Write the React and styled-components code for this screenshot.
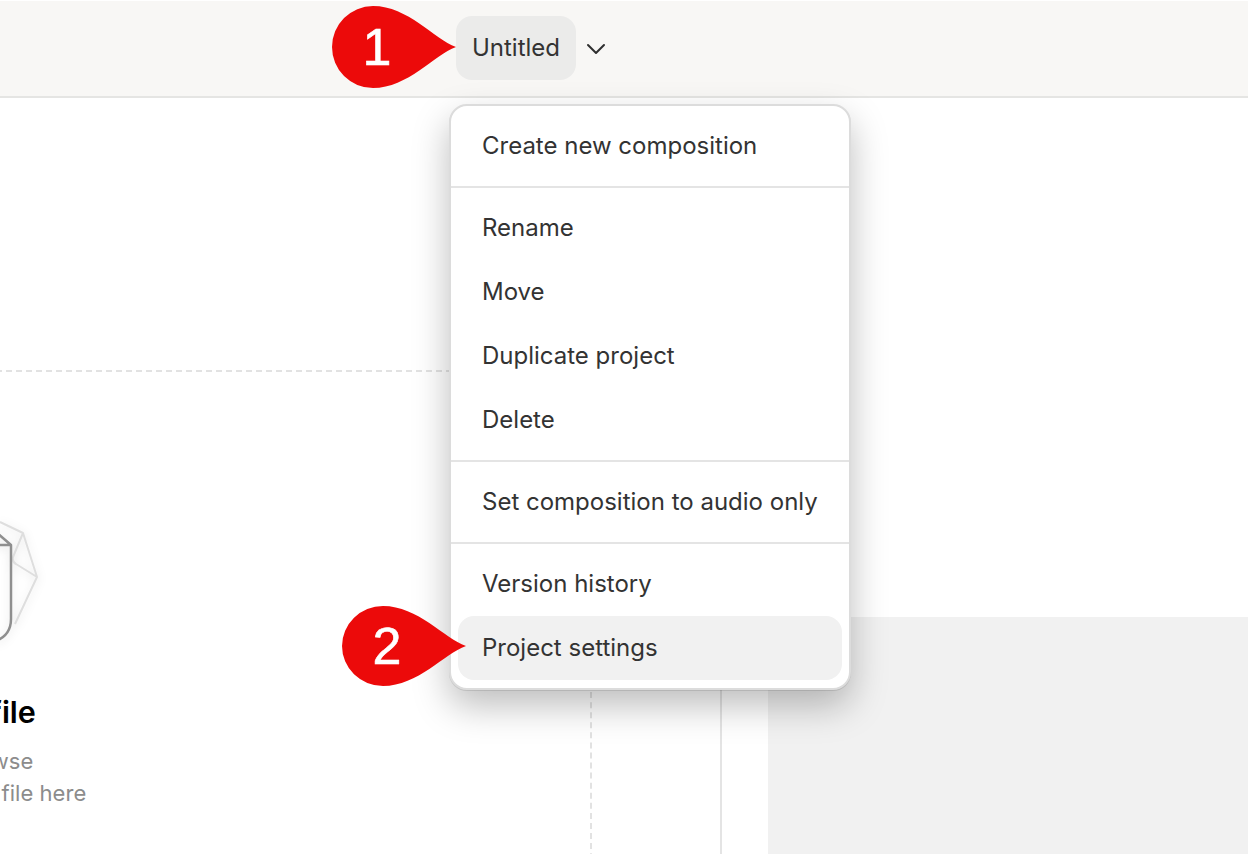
import styled, { createGlobalStyle } from "styled-components";

const GlobalStyle = createGlobalStyle`
  html, body {
    margin: 0;
    padding: 0;
    background: #fff;
    font-family: Inter, "Liberation Sans", sans-serif;
  }
`;

const menuGroups = [
  ["Create new composition"],
  ["Rename", "Move", "Duplicate project", "Delete"],
  ["Set composition to audio only"],
  ["Version history", "Project settings"],
];

const Teardrop = ({ number, top, left, height }) => (
  <Badge $top={top} $left={left} $height={height}>
    <svg width="124" height={height} viewBox="0 0 124 82" preserveAspectRatio="none">
      <path
        d="M124 41C102 33 76 0 41 0A41 41 0 0 0 41 82C76 82 102 49 124 41Z"
        fill="#ec0a0a"
      />
    </svg>
    <BadgeNumber>{number}</BadgeNumber>
  </Badge>
);

const UploadIcon = () => (
  <IconFrame width="188" height="130" viewBox="0 0 188 130" fill="none">
    <path
      d="M150 5L173 16L187 60L165 107M173 16L163 40Q162 45 166 47L187 60"
      stroke="#dedede"
      strokeWidth="2"
      strokeLinejoin="round"
    />
    <path
      d="M146 15L161 28V102Q161 118 146 124M132 28H161"
      stroke="#8f8f8f"
      strokeWidth="2.5"
      strokeLinejoin="round"
    />
  </IconFrame>
);

const App = () => (
  <Page>
    <GlobalStyle />
    <Header>
      <TitleButton>Untitled</TitleButton>
      <svg width="20" height="12" viewBox="0 0 20 12" fill="none">
        <path d="M2 2L10 10L18 2" stroke="#2f2f2f" strokeWidth="2" strokeLinecap="round" strokeLinejoin="round" />
      </svg>
    </Header>
    <Main>
      <EditorColumn>
        <DropZone>
          <UploadIcon />
          <DropTitle>Upload a file</DropTitle>
          <DropHint>Import or browse</DropHint>
          <DropHint>or drag and drop a file here</DropHint>
        </DropZone>
      </EditorColumn>
      <SideColumn>
        <SidePanel />
      </SideColumn>
    </Main>
    <Menu>
      {menuGroups.map((group) => (
        <MenuGroup key={group[0]}>
          {group.map((item) => (
            <MenuItem key={item} $active={item === "Project settings"}>
              {item}
            </MenuItem>
          ))}
        </MenuGroup>
      ))}
    </Menu>
    <Teardrop number="1" top={6} left={332} height={82} />
    <Teardrop number="2" top={606} left={342} height={80} />
  </Page>
);

const Page = styled.div`
  position: relative;
  width: 1248px;
  height: 854px;
  overflow: hidden;
  display: flex;
  flex-direction: column;
  background: #fff;
`;

const Header = styled.header`
  box-sizing: border-box;
  flex: none;
  height: 97px;
  margin-top: 1px;
  padding-left: 456px;
  display: flex;
  align-items: center;
  gap: 10px;
  background: #f8f7f5;
  border-bottom: 2px solid #e5e5e3;
`;

const TitleButton = styled.div`
  box-sizing: border-box;
  width: 120px;
  height: 64px;
  margin-top: -1px;
  padding-bottom: 1px;
  display: flex;
  align-items: center;
  justify-content: center;
  border-radius: 16px;
  background: #ebebea;
  color: #333;
  font-size: 24px;
`;

const Main = styled.main`
  flex: 1;
  min-height: 0;
  padding-top: 8px;
  display: grid;
  grid-template-columns: 722px 1fr;
`;

const EditorColumn = styled.section`
  box-sizing: border-box;
  padding-top: 264px;
  border-right: 2px solid #e4e4e4;
`;

const DropZone = styled.div`
  box-sizing: border-box;
  width: 1296px;
  height: 620px;
  margin-left: -704px;
  padding-top: 145px;
  display: flex;
  flex-direction: column;
  align-items: center;
  border: 2px dashed #e2e2e2;
`;

const IconFrame = styled.svg`
  filter: drop-shadow(0 2px 5px rgba(0, 0, 0, 0.12));
`;

const DropTitle = styled.h2`
  margin: 45px 0 13px;
  color: #000;
  font-size: 30.5px;
  line-height: 40px;
  font-weight: 600;
`;

const DropHint = styled.p`
  margin: 0;
  color: #8c8c8c;
  font-size: 22px;
  line-height: 32px;
  letter-spacing: 0.03px;
`;

const SideColumn = styled.aside`
  box-sizing: border-box;
  padding: 511px 0 0 46px;
  display: flex;
`;

const SidePanel = styled.div`
  flex: 1;
  background: #f1f1f1;
`;

const Menu = styled.nav`
  position: absolute;
  top: 104px;
  left: 449px;
  box-sizing: border-box;
  width: 402px;
  background: #fff;
  border: 2px solid #dcdcdc;
  border-radius: 18px;
  box-shadow: 0 1px 0 rgba(0, 0, 0, 0.1), 0 16px 36px rgba(0, 0, 0, 0.26);
`;

const MenuGroup = styled.div`
  padding: 8px 7px;

  & + & {
    border-top: 2px solid #e4e4e4;
  }
`;

const MenuItem = styled.div`
  height: 64px;
  padding: 0 0 2px 24px;
  box-sizing: border-box;
  display: flex;
  align-items: center;
  border-radius: 16px;
  background: ${(props) => (props.$active ? "#f1f1f1" : "transparent")};
  color: #333;
  font-size: 24px;
`;

const Badge = styled.div`
  position: absolute;
  top: ${(props) => props.$top}px;
  left: ${(props) => props.$left}px;
  width: 124px;
  height: ${(props) => props.$height}px;

  svg {
    display: block;
  }
`;

const BadgeNumber = styled.span`
  position: absolute;
  top: 0;
  bottom: 0;
  left: 0;
  width: 90px;
  display: flex;
  align-items: center;
  justify-content: center;
  color: #fff;
  font-family: "Liberation Sans", Arial, sans-serif;
  font-size: 52px;
  -webkit-text-stroke: 0.6px #fff;
`;

export default App;
